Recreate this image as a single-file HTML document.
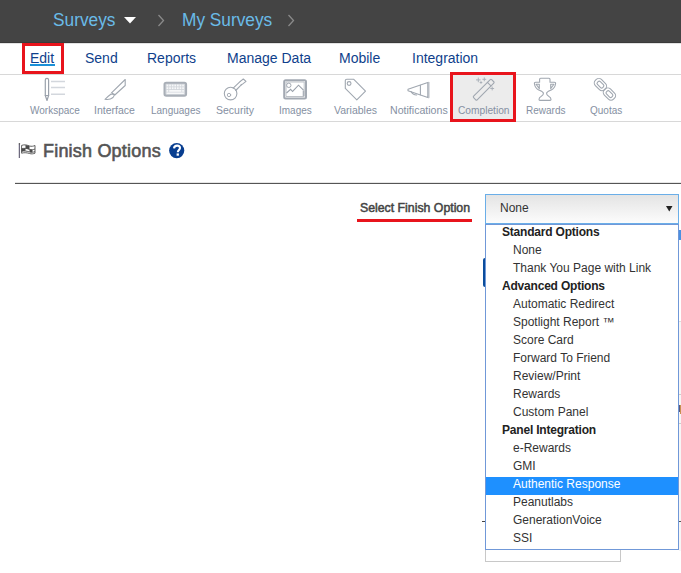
<!DOCTYPE html>
<html><head><meta charset="utf-8">
<style>
*{margin:0;padding:0;box-sizing:border-box}
html,body{width:681px;height:573px;overflow:hidden;background:#fff;font-family:"Liberation Sans",sans-serif;position:relative}
.a{position:absolute;white-space:nowrap}
.crumb{color:#6abbe8;font-size:18px;top:9.5px;line-height:20px;transform-origin:0 0;transform:scaleX(0.96)}
.it{top:50px;font-size:14px;line-height:16px;color:#0f3f8c}
.sep{left:0;width:681px;height:1px;background:#d8d8d8}
.lbl{top:105px;font-size:10px;line-height:12px;color:#8590a2}
.redbox{border:3px solid #e8141c}
.opt{font-size:12px;line-height:14px;height:18px;color:#333;width:192px;position:relative}
.opt.g{font-weight:bold;color:#222;padding-left:16px;font-size:12px;letter-spacing:-0.2px;line-height:15px}
.opt.i{padding-left:27px}
.opt.sel{background:#1e90ff;color:#fff}
svg.ic{position:absolute;left:0;top:0}
</style></head><body>
<div class="a" style="left:0;top:0;width:681px;height:42px;background:#444"></div>
<div class="a" style="left:0;top:42px;width:681px;height:1px;background:#3a3a3a"></div>
<div class="a crumb" style="left:53px">Surveys</div>
<div class="a crumb" style="left:182px">My Surveys</div>

<div class="a" style="left:0;top:43px;width:681px;height:1px;background:#e2e2e2"></div>
<div class="a it" style="left:30px">Edit</div>
<div class="a" style="left:30px;top:64px;width:25px;height:2px;background:#1a90d8"></div>
<div class="a it" style="left:85px">Send</div>
<div class="a it" style="left:147px">Reports</div>
<div class="a it" style="left:227px">Manage Data</div>
<div class="a it" style="left:339px">Mobile</div>
<div class="a it" style="left:412px">Integration</div>
<div class="a redbox" style="left:22px;top:43px;width:42px;height:31px"></div>
<div class="a sep" style="top:74px"></div>
<div class="a sep" style="top:121px"></div>

<!-- toolbar -->
<div class="a" style="left:453px;top:75px;width:60px;height:46px;background:#ececec"></div>
<div class="a redbox" style="left:450px;top:72px;width:66px;height:50px"></div>
<div class="a lbl" style="left:30px">Workspace</div>
<div class="a lbl" style="top:104px;left:94px;font-size:10.5px">Interface</div>
<div class="a lbl" style="left:151px">Languages</div>
<div class="a lbl" style="top:104px;left:216px;font-size:10.5px">Security</div>
<div class="a lbl" style="left:279px">Images</div>
<div class="a lbl" style="top:104px;left:334px;font-size:10.5px">Variables</div>
<div class="a lbl" style="top:104px;left:390px;font-size:10.6px">Notifications</div>
<div class="a lbl" style="left:458px;font-size:10.2px">Completion</div>
<div class="a lbl" style="left:526px">Rewards</div>
<div class="a lbl" style="left:590px">Quotas</div>

<!-- heading -->
<div class="a" style="left:43px;top:141px;font-size:18px;line-height:20px;color:#555;letter-spacing:0.2px;-webkit-text-stroke:0.6px #555">Finish Options</div>
<div class="a" style="left:15px;top:182px;width:666px;height:1px;background:#e6e6e6"></div><div class="a" style="left:15px;top:183px;width:666px;height:1px;background:#555"></div>

<div class="a" style="left:360px;top:201px;font-size:12.3px;line-height:14px;color:#444;-webkit-text-stroke:0.5px #444">Select Finish Option</div>
<div class="a" style="left:357px;top:219px;width:115px;height:3px;background:#e8141c"></div>

<!-- background bits -->
<div class="a" style="left:483px;top:258px;width:4px;height:29px;background:#0b4d9c;border-radius:2px 0 0 2px"></div>
<div class="a" style="left:482px;top:521px;width:4px;height:1px;background:#444"></div>
<div class="a" style="left:485px;top:540px;width:136px;height:22px;border:1px solid #c8c8c8;background:#fff"></div>
<div class="a" style="left:679px;top:230px;width:2px;height:10px;background:#4a90e2"></div>
<div class="a" style="left:679px;top:321px;width:2px;height:230px;background:#f6f6f6"></div>
<div class="a" style="left:679px;top:321px;width:2px;height:1px;background:#ddd"></div>
<div class="a" style="left:679px;top:394px;width:2px;height:1px;background:#ccc"></div>
<div class="a" style="left:679px;top:405px;width:1px;height:7px;background:#5a5a7a"></div><div class="a" style="left:680px;top:405px;width:1px;height:9px;background:#c89050"></div>
<div class="a" style="left:679px;top:423px;width:2px;height:1px;background:#ccc"></div>
<div class="a" style="left:679px;top:521px;width:2px;height:1px;background:#555"></div>

<!-- select -->
<div class="a" style="left:485px;top:194px;width:194px;height:30px;border:1px solid #6aaee8;background:linear-gradient(#e4e4e4,#fcfcfc)"></div>
<div class="a" style="left:500px;top:200px;font-size:12px;line-height:16px;color:#333">None</div>

<div class="a" style="left:485px;top:224px;width:194px;height:326px;border:1px solid #7098d8;background:#fff"></div>
<div class="a" style="left:486px;top:225px;width:192px">
<div class="opt g">Standard Options</div>
<div class="opt i">None</div>
<div class="opt i">Thank You Page with Link</div>
<div class="opt g">Advanced Options</div>
<div class="opt i">Automatic Redirect</div>
<div class="opt i">Spotlight Report ™</div>
<div class="opt i">Score Card</div>
<div class="opt i">Forward To Friend</div>
<div class="opt i">Review/Print</div>
<div class="opt i">Rewards</div>
<div class="opt i">Custom Panel</div>
<div class="opt g">Panel Integration</div>
<div class="opt i">e-Rewards</div>
<div class="opt i">GMI</div>
<div class="opt i sel">Authentic Response</div>
<div class="opt i">Peanutlabs</div>
<div class="opt i">GenerationVoice</div>
<div class="opt i">SSI</div>
</div>

<svg class="ic" width="681" height="573" viewBox="0 0 681 573">
<!-- header triangle & chevrons -->
<path d="M124 17H136L130 23.5Z" fill="#fff"/>
<path d="M158.5 15L163.5 20.5L158.5 26" stroke="#8a8a8a" stroke-width="1.3" fill="none"/>
<path d="M288.5 15L293.5 20.5L288.5 26" stroke="#8a8a8a" stroke-width="1.3" fill="none"/>
<!-- select arrow -->
<path d="M666 206H672.5L669.25 211.5Z" fill="#222"/>
<!-- help icon -->
<circle cx="176.7" cy="150.6" r="7.6" fill="#083e90"/>
<path d="M174 148.3C174.2 146.6 175.4 145.6 177.1 145.6C178.9 145.6 180 146.7 180 148.1C180 149.9 177.8 150.3 177.8 152.2" stroke="#fff" stroke-width="2.1" fill="none"/>
<rect x="176.6" y="153.4" width="2.3" height="2.3" fill="#fff"/>
<!-- flag -->
<path d="M19.3 144V158" stroke="#4a4560" stroke-width="1"/>
<circle cx="19.4" cy="143.8" r="0.8" fill="#555"/>
<g stroke="#444" fill="none" stroke-width="0.85">
<path d="M21.6 145.4C24.5 144.2 27.5 145.2 29.5 146C31.5 146.6 33.5 146.2 35 145.5V153.2C33.5 153.8 31.5 154.2 29.5 153.5C27.5 152.8 24.5 152.3 21.6 153.2Z"/>
<path d="M21.6 148.8C24.5 147.8 27.5 148.6 29.5 149.4C31.5 150.1 33.5 149.6 35 149M21.6 151.3C24.5 150.5 27.5 151.3 29.5 152C31.5 152.6 33.5 152.2 35 151.6"/>
</g>
<g fill="#4a4a4a">
<path d="M25.5 145L29.5 146V149.4L25.5 148.3Z"/>
<path d="M21.6 148.8L25.5 148.3V150.7L21.6 151.3Z"/>
<path d="M29.5 149.4L32.5 149.7V152.3L29.5 152Z"/>
</g>
<!-- workspace pencil -->
<g stroke="#9aa1ab" fill="none" stroke-width="1.2" stroke-linejoin="round" stroke-linecap="round">
<path d="M45.3 95.5V80C45.3 78.8 46 78.3 47 78.3C48 78.3 48.6 78.8 48.6 80V95.5Z"/>
<path d="M45.3 95.5L47 100.5L48.6 95.5"/>
</g>
<g stroke="#d3d7dd" stroke-width="1.5">
<path d="M51 81.5H65M51 87.5H65M51 94.3H65"/>
</g>
<g stroke="#a0a7b0" fill="none" stroke-width="1.1" stroke-linejoin="round" stroke-linecap="round">
<!-- interface knife -->
<path d="M125.2 79.5V85.5L114.8 95L111.5 92.8Z"/>
<path d="M110.6 94.2H114.6"/>
<path d="M110.8 94.3C108.5 96 106.5 97.8 105 99.3C108 99.8 111.5 98.8 113 97.5C113.8 96.6 114.2 95.6 114.4 94.5"/>
<!-- security key -->
<circle cx="230.6" cy="93.6" r="6.3"/>
<circle cx="229" cy="95" r="1.7" stroke-width="0.9"/>
<path d="M233.2 88.1L240.3 81.4M235.7 90.5L241 85.2"/>
<path d="M240.3 81.4L243.3 79L246 81.4L242.8 83.9L241.6 84.4L241 85.2"/>
<!-- variables tag -->
<path d="M345.3 80.6C345.3 79.8 346 79.3 346.8 79.3H353.8L365.5 91.2L356.8 99.8L345.3 88.4Z"/>
<circle cx="349.1" cy="83.5" r="1.9"/>
<!-- notifications megaphone -->
<path d="M408 89.3L427.8 82.5V97.5L408 90.7Z"/><path d="M428.7 82.6V97.6" stroke-width="1.6" stroke="#b9bec5"/>
<path d="M420.4 85.3V94.8"/>
<path d="M411 91.5C412 93.5 413.5 94.8 416.6 95"/>
<!-- trophy -->
<path d="M540.6 78.2H549C549.6 78.2 550 78.6 550 79.2V82.2H554.4C555.2 82.2 555.7 82.7 555.6 83.5C555.3 86.3 554.2 88.6 550.8 90.2C548.6 91.1 546.8 91.8 546.6 93.2C546.5 94.6 547.2 95.7 549 96.6C550.6 97.3 551 98.4 551 99.6C551 100.1 550.6 100.4 550.1 100.4H539.9C539.4 100.4 539 100.1 539 99.6C539 98.4 539.4 97.3 541 96.6C542.8 95.7 543.5 94.6 543.4 93.2C543.2 91.8 541.4 91.1 539.2 90.2C535.8 88.6 534.7 86.3 534.4 83.5C534.3 82.7 534.8 82.2 535.6 82.2H539.6V79.2C539.6 78.6 540 78.2 540.6 78.2Z"/>
<path d="M536 84.3H539.3V88.8M554 84.3H550.7V88.8M536.6 85L539 88.2M553.4 85L551 88.2"/>
<!-- chain -->
<g transform="rotate(45 600.5 84.5)"><rect x="594" y="80.3" width="13" height="8.6" rx="3.6"/><rect x="596.8" y="82.6" width="7.4" height="4" rx="1.5"/></g>
<g transform="rotate(45 609.5 94)"><rect x="603" y="89.8" width="13" height="8.6" rx="3.6"/><rect x="605.8" y="92.1" width="7.4" height="4" rx="1.5"/></g>
<!-- wand -->
<g transform="rotate(-45 483.6 89.8)"><rect x="471" y="87.3" width="25.5" height="5" rx="1"/><path d="M491.5 87.3V92.3"/></g>
</g>
<!-- wand sparkles -->
<g stroke="#a6adb6" stroke-width="0.9" fill="none">
<path d="M478.3 77.6V82.2M476 79.9H480.6"/>
<path d="M484.3 77.4V81.2M482.4 79.3H486.2"/>
<path d="M481 81.2V83.8M479.7 82.5H482.3"/>
<path d="M492.2 86.6V90.4M490.3 88.5H494.1"/>
</g>
<!-- keyboard -->
<rect x="164.5" y="82.8" width="21.6" height="13" rx="1.8" stroke="#a9afb7" stroke-width="2" fill="#d3d7dc"/>
<g fill="#f7f8f9">
<rect x="166.6" y="84.6" width="1.7" height="1.8"/><rect x="169.2" y="84.6" width="1.7" height="1.8"/><rect x="171.8" y="84.6" width="1.7" height="1.8"/><rect x="174.4" y="84.6" width="1.7" height="1.8"/><rect x="177.0" y="84.6" width="1.7" height="1.8"/><rect x="179.6" y="84.6" width="1.7" height="1.8"/><rect x="182.2" y="84.6" width="1.7" height="1.8"/><rect x="166.6" y="87.3" width="1.7" height="1.8"/><rect x="169.2" y="87.3" width="1.7" height="1.8"/><rect x="171.8" y="87.3" width="1.7" height="1.8"/><rect x="174.4" y="87.3" width="1.7" height="1.8"/><rect x="177.0" y="87.3" width="1.7" height="1.8"/><rect x="179.6" y="87.3" width="1.7" height="1.8"/><rect x="182.2" y="87.3" width="1.7" height="1.8"/><rect x="166.6" y="90.0" width="1.7" height="1.8"/><rect x="182.2" y="90.0" width="1.7" height="1.8"/><rect x="169.2" y="90" width="12.2" height="1.8"/><rect x="166.6" y="92.5" width="17.3" height="1.5"/>
</g>
<!-- images -->
<rect x="284.2" y="80.3" width="21.8" height="18.3" rx="1.5" stroke="#a3a9b2" stroke-width="2" fill="none"/>
<path d="M286 82H304.2V96.5H286Z" stroke="#b5bac1" stroke-width="0.9" fill="none"/>
<circle cx="288.8" cy="85.3" r="2.2" stroke="#a3a9b2" stroke-width="1" fill="none"/>
<path d="M286.5 93L290.6 89.3L292.6 91.5L298.5 85.2L303.5 90.2" stroke="#9aa1ab" stroke-width="1.1" fill="none"/>
<path d="M303.5 90.5V96" stroke="#aab0b8" stroke-width="1.6"/>
</svg>
</body></html>
